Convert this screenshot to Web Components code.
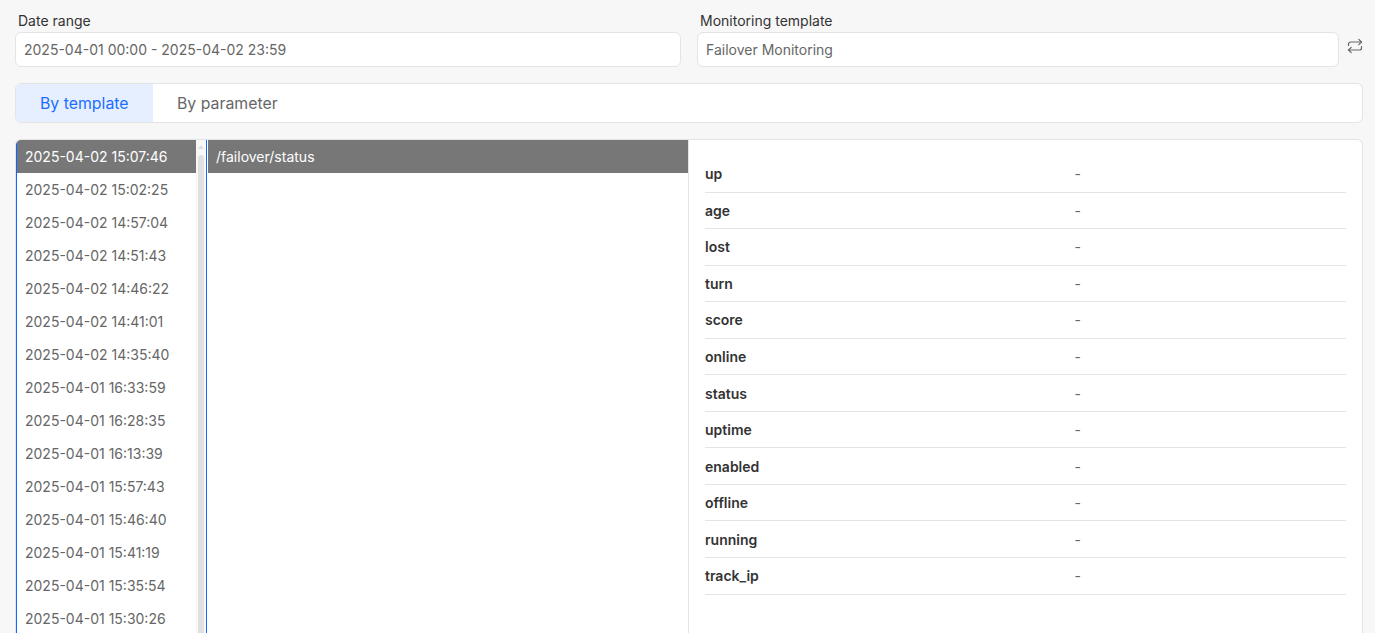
<!DOCTYPE html>
<html lang="en"><head><meta charset="utf-8"><title>Monitoring</title>
<style>
html,body{margin:0;height:633px;overflow:hidden;background:#f7f7f7;font-family:Inter,"Liberation Sans",sans-serif;font-size:14px;color:#333}
</style></head><body>
<app-page></app-page>
<script>
function def(name, css, html, extra){
  customElements.define(name, class extends HTMLElement{
    constructor(){super();this.attachShadow({mode:'open'}).innerHTML='<style>'+css+'</style>'+html;}
    connectedCallback(){ if(extra) extra.call(this); }
  });
}
def('form-field',
 `:host{display:flex;flex-direction:column;flex:none;box-sizing:border-box}
  label{font-size:14px;line-height:17px;color:#333;padding-left:3px;height:20px}
  .box{height:35px;box-sizing:border-box;border:1px solid #e4e4e4;border-radius:6px;background:#fff;padding:0 8px;display:flex;align-items:center;font-size:14px;color:#666}`,
 `<label></label><div class="box"></div>`,
 function(){this.shadowRoot.querySelector('label').textContent=this.getAttribute('label');this.shadowRoot.querySelector('.box').textContent=this.getAttribute('value');});
def('swap-button',
 `:host{display:flex;align-items:center;justify-content:center;width:16px;height:28px;flex:none;margin-bottom:7px}svg{display:block}`,
 `<svg width="16" height="16" viewBox="0 0 16 16" fill="none" stroke="#666" stroke-width="1.2" stroke-linecap="round" stroke-linejoin="round"><path d="M1.500 7.500V6a2 2 0 0 1 2-2h11"/><path d="M11.800 1.400 14.500 4l-2.700 2.600"/><path d="M14.500 8.500V10a2 2 0 0 1-2 2h-11"/><path d="M4.200 14.600 1.500 12l2.700-2.600"/></svg>`);
def('top-filters',
 `:host{display:flex;gap:16px;align-items:flex-end}
  .a{width:666px}.b{width:642px}
  swap-button{margin-left:-8px}`,
 `<form-field class="a" label="Date range" value="2025-04-01 00:00 - 2025-04-02 23:59"></form-field>
  <form-field class="b" label="Monitoring template" value="Failover Monitoring"></form-field>
  <swap-button></swap-button>`);
def('tab-bar',
 `:host{display:flex;height:40px;box-sizing:border-box;margin-top:16px;border:1px solid #e4e4e4;border-radius:6px;background:#fff;overflow:hidden;font-size:15.85px}
  div{display:flex;align-items:center;padding:0 24px;color:#666}
  .on{background:#e6efff;color:#1a6dff;width:137px;box-sizing:border-box;flex:none;white-space:nowrap}`,
 `<div class="on">By template</div><div>By parameter</div>`);
def('time-list',
 `:host{display:flex;width:191px;flex:none;border-left:1px solid #0d66ff;border-right:1px solid #0d66ff;box-sizing:border-box;height:500px}
  .items{width:179px;flex:none}
  .it{height:33px;line-height:33px;padding-left:8px;color:#666;font-size:14px}
  .it.on{background:#777;color:#fff}
  .sb{flex:1;background:#f8f8f8;position:relative}
  .sb i{position:absolute;left:2px;width:6px;top:15px;bottom:0;background:#e0e0e0;border-radius:3px 3px 0 0}
  .sb b{position:absolute;left:2px;top:5px;border:3px solid transparent;border-top:0;border-bottom:4px solid #ddd}`,
 `<div class="items"></div><div class="sb"><b></b><i></i></div>`,
 function(){
  const t=['2025-04-02 15:07:46','2025-04-02 15:02:25','2025-04-02 14:57:04','2025-04-02 14:51:43','2025-04-02 14:46:22','2025-04-02 14:41:01','2025-04-02 14:35:40','2025-04-01 16:33:59','2025-04-01 16:28:35','2025-04-01 16:13:39','2025-04-01 15:57:43','2025-04-01 15:46:40','2025-04-01 15:41:19','2025-04-01 15:35:54','2025-04-01 15:30:26'];
  this.shadowRoot.querySelector('.items').innerHTML=t.map((x,i)=>`<div class="it${i?'':' on'}">${x}</div>`).join('');
 });
def('path-list',
 `:host{display:block;flex:none;width:482px;box-sizing:border-box;padding-left:1px;border-right:1px solid #e4e4e4;height:500px}
  div{height:33px;line-height:33px;padding-left:8px;background:#777;color:#fff;font-size:14px}`,
 `<div>/failover/status</div>`);
def('param-table',
 `:host{display:block;flex:1;padding:16px 16px 0}
  .r{display:grid;grid-template-columns:369.5px 1fr;height:36.55px;box-sizing:border-box;align-items:center;border-bottom:1px solid #e4e4e4}
  b{font-weight:600;color:#333;font-size:14px}span{color:#666}`,
 `<div id="t"></div>`,
 function(){
  const p=['up','age','lost','turn','score','online','status','uptime','enabled','offline','running','track_ip'];
  this.shadowRoot.getElementById('t').innerHTML=p.map(x=>`<div class="r"><b>${x}</b><span>-</span></div>`).join('');
 });
def('result-panel',
 `:host{display:flex;margin-top:16px;height:520px;box-sizing:border-box;border:1px solid #e4e4e4;border-radius:6px 6px 0 0;background:#fff;overflow:hidden}`,
 `<time-list></time-list><path-list></path-list><param-table></param-table>`);
def('app-page',
 `:host{display:block;padding:12px 12px 0 15px;height:633px;box-sizing:border-box;overflow:hidden}`,
 `<top-filters></top-filters><tab-bar></tab-bar><result-panel></result-panel>`);
</script></body></html>
